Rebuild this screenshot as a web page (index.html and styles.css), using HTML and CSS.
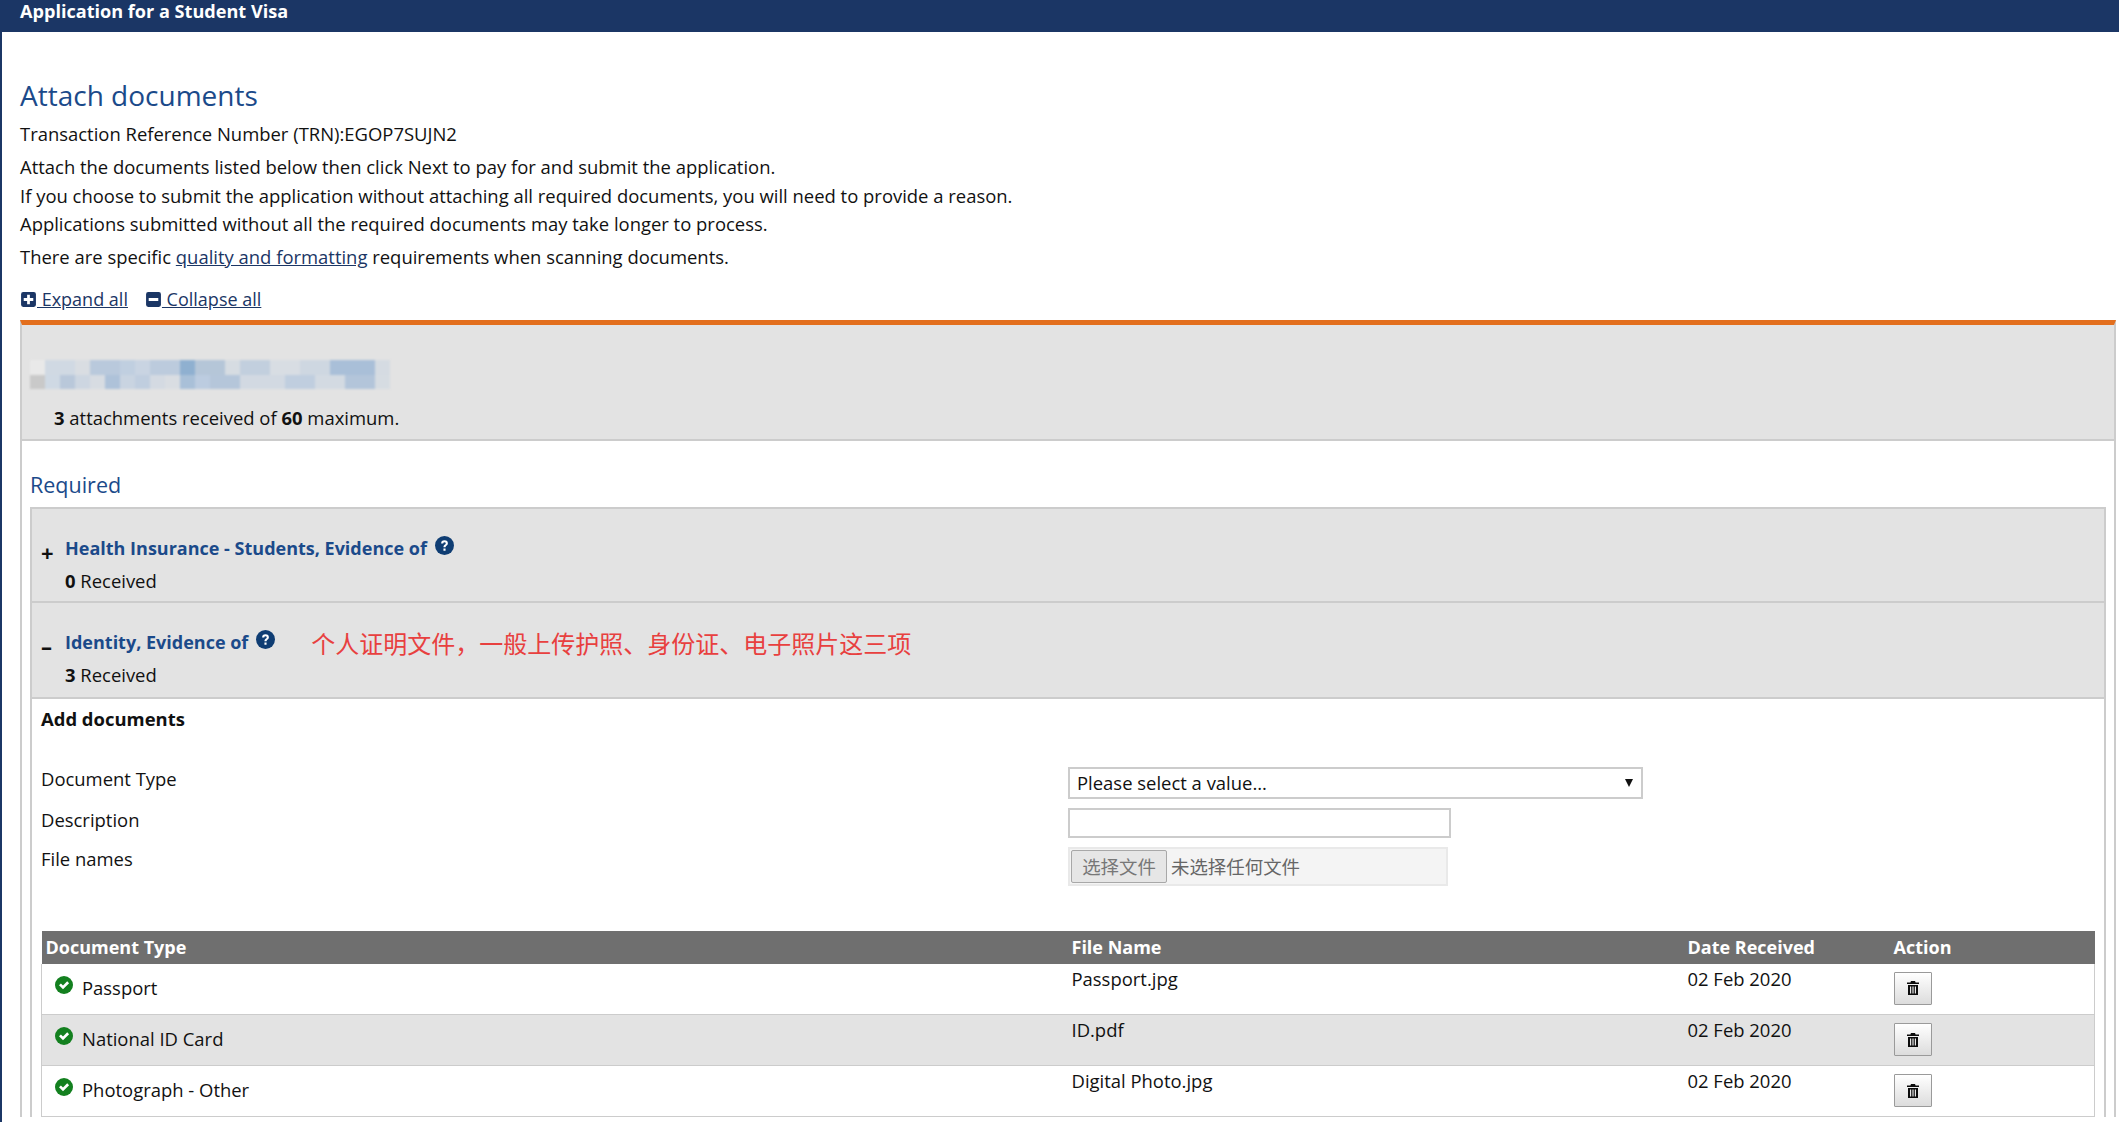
FILE: index.html
```html
<!DOCTYPE html>
<html lang="en">
<head>
    <meta charset="UTF-8">
    <meta name="viewport" content="width=device-width, initial-scale=1.0">
    <title>Application for a Student Visa</title>
    <link rel="stylesheet" href="styles.css">
</head>
<body>
    <svg class="defs" width="0" height="0">
        <symbol id="i-plus" viewBox="0 0 16 16"><path fill-rule="evenodd" d="M3 1h10a2 2 0 0 1 2 2v10a2 2 0 0 1-2 2H3a2 2 0 0 1-2-2V3a2 2 0 0 1 2-2zM6.700 3.500v3.200H3.500v2.600h3.200v3.200h2.600V9.300h3.200V6.700H9.300V3.500z"/></symbol>
        <symbol id="i-minus" viewBox="0 0 16 16"><path fill-rule="evenodd" d="M3 1h10a2 2 0 0 1 2 2v10a2 2 0 0 1-2 2H3a2 2 0 0 1-2-2V3a2 2 0 0 1 2-2zM3.500 6.700v2.600h9V6.700z"/></symbol>
        <symbol id="i-help" viewBox="0 0 18 18">
            <circle cx="9" cy="9" r="9"/>
            <path d="M5.800 7a3.200 3 0 0 1 6.400 0c0 2-2.200 2-2.200 3.600H8c0-2.600 2.200-2.600 2.200-3.600a1.200 1.100 0 0 0-2.400 0zM8 11.800h2v2.100H8z" fill="#fff"/>
        </symbol>
        <symbol id="i-check" viewBox="0 0 18 18">
            <circle cx="9" cy="9" r="9"/>
            <path d="M4 9.300l1.900-1.900 2.100 2.100 4.200-4.200 1.900 1.900-6.100 6.100z" fill="#fff"/>
        </symbol>
        <symbol id="i-trash" viewBox="0 0 14 14"><path fill-rule="evenodd" d="M5 0h4l.6 1.500H13V3H1V1.500h3.400zM2 4h10v10H2zM4 5.500v7h1.200v-7zM6.400 5.500v7h1.200v-7zM8.800 5.500v7H10v-7z"/></symbol>
    </svg>

    <div class="banner">Application for a Student Visa</div>

    <div class="content">
        <h1 class="page-title">Attach documents</h1>
        <p class="trn">Transaction Reference Number (TRN):EGOP7SUJN2</p>
        <div class="intro">
            Attach the documents listed below then click Next to pay for and submit the application.<br>
            If you choose to submit the application without attaching all required documents, you will need to provide a reason.<br>
            Applications submitted without all the required documents may take longer to process.
        </div>
        <p class="scan-note">There are specific <a href="#">quality and formatting</a> requirements when scanning documents.</p>

        <div class="toggle-all">
            <a href="#"><svg class="toggle-icon"><use href="#i-plus"/></svg> Expand all</a>
            <a href="#"><svg class="toggle-icon"><use href="#i-minus"/></svg> Collapse all</a>
        </div>

        <div class="panel">
            <div class="panel-head">
                <div class="blurred"></div>
                <div class="count"><b>3</b> attachments received of <b>60</b> maximum.</div>
            </div>
            <div class="panel-body">
                <h2 class="required">Required</h2>
                <div class="accordion">
                    <div class="acc-row">
                        <div class="acc-title">
                            <span class="acc-sign">+</span>
                            <a class="acc-link" href="#">Health Insurance - Students, Evidence of</a>
                            <svg class="help"><use href="#i-help"/></svg>
                        </div>
                        <div class="acc-count"><b>0</b> Received</div>
                    </div>
                    <div class="acc-row">
                        <div class="acc-title">
                            <span class="acc-sign">–</span>
                            <a class="acc-link" href="#">Identity, Evidence of</a>
                            <svg class="help"><use href="#i-help"/></svg>
                            <span class="note">个人证明文件，一般上传护照、身份证、电子照片这三项</span>
                        </div>
                        <div class="acc-count"><b>3</b> Received</div>
                    </div>
                    <div class="acc-open">
                        <div class="add-title">Add documents</div>
                        <div class="form">
                            <label class="form-label">Document Type</label>
                            <div class="fake-select"><span>Please select a value...</span><span class="arrow"></span></div>
                            <label class="form-label">Description</label>
                            <div class="fake-input"></div>
                            <label class="form-label">File names</label>
                            <div class="fake-file"><span class="file-btn">选择文件</span><span class="file-none">未选择任何文件</span></div>
                        </div>
                        <table class="docs">
                            <thead>
                                <tr>
                                    <th class="col-type">Document Type</th>
                                    <th class="col-file">File Name</th>
                                    <th class="col-date">Date Received</th>
                                    <th class="col-action">Action</th>
                                </tr>
                            </thead>
                            <tbody>
                                <tr>
                                    <td class="doc-type"><svg class="check"><use href="#i-check"/></svg>Passport</td>
                                    <td>Passport.jpg</td>
                                    <td>02 Feb 2020</td>
                                    <td><button class="trash"><svg class="trash-icon"><use href="#i-trash"/></svg></button></td>
                                </tr>
                                <tr>
                                    <td class="doc-type"><svg class="check"><use href="#i-check"/></svg>National ID Card</td>
                                    <td>ID.pdf</td>
                                    <td>02 Feb 2020</td>
                                    <td><button class="trash"><svg class="trash-icon"><use href="#i-trash"/></svg></button></td>
                                </tr>
                                <tr>
                                    <td class="doc-type"><svg class="check"><use href="#i-check"/></svg>Photograph - Other</td>
                                    <td>Digital Photo.jpg</td>
                                    <td>02 Feb 2020</td>
                                    <td><button class="trash"><svg class="trash-icon"><use href="#i-trash"/></svg></button></td>
                                </tr>
                            </tbody>
                        </table>
                    </div>
                </div>
            </div>
        </div>
    </div>
</body>
</html>
```

FILE: styles.css
```css
* {
    margin: 0;
    padding: 0;
    box-sizing: border-box;
}

html, body {
    height: 1122px;
    overflow: hidden;
}

body {
    border-left: 2px solid #1b3665;
    background: #fff;
    color: #111;
    font-family: "Open Sans", "Noto Sans CJK SC", sans-serif;
    font-size: 18.45px;
}

.defs {
    position: absolute;
}

.banner {
    height: 32px;
    margin-left: -2px;
    padding-left: 20px;
    background: #1b3665;
    color: #fff;
    font-size: 18.1px;
    font-weight: 700;
    line-height: 22px;
}

.content {
    padding: 43px 3px 0 18px;
}

.page-title {
    height: 40px;
    color: #1b4a8a;
    font-size: 28px;
    font-weight: 400;
    line-height: 40px;
}

.trn {
    margin-top: 5px;
    line-height: 28px;
}

.intro {
    margin-top: 5px;
    line-height: 28.5px;
}

.scan-note {
    margin-top: 4px;
    line-height: 28px;
}

.scan-note a, .toggle-all a {
    color: #1b3665;
}

.toggle-all {
    display: flex;
    gap: 17px;
    margin-top: 14px;
    height: 28px;
    font-size: 18px;
    line-height: 28px;
}

.toggle-icon {
    width: 17px;
    height: 17px;
    fill: #1b3665;
    vertical-align: -2px;
}

.panel {
    margin-top: 7px;
    border-top: 5px solid #e36f1e;
    border-left: 2px solid #ccc;
    border-right: 2px solid #ccc;
}

.panel-head {
    height: 116px;
    padding-top: 35px;
    background: #e3e3e3;
    border-bottom: 2px solid #ccc;
}

.blurred {
    width: 360px;
    height: 29px;
    margin-left: 8px;
    background-image:
        linear-gradient(90deg, #e9e9e9 15px, #d0d9e3 15px 45px, #d9dde2 45px 60px, #b9c9dc 60px 90px, #c0cfe0 90px 105px, #c9d4e2 105px 120px, #bccbdd 120px 150px, #8fb0d0 150px 165px, #b5c6d8 165px 195px, #d6dce2 195px 210px, #c2cfde 210px 240px, #d8dde3 240px 270px, #ced7e1 270px 300px, #a9bfd8 300px 345px, #d5dbe2 345px),
        linear-gradient(90deg, #c9c9c9 15px, #cfd9e4 15px 30px, #b9c8da 30px 45px, #cdd6e1 45px 60px, #d7dce2 60px 75px, #aec2d9 75px 90px, #c9d4e1 90px 105px, #c0cedf 105px 120px, #d4dae2 120px 135px, #d9dde2 135px 150px, #a9c0d8 150px 165px, #bccce0 165px 180px, #b5c6da 180px 210px, #d2d9e2 210px 255px, #c0cedf 255px 285px, #d3dae2 285px 315px, #b3c5da 315px 345px, #d6dce2 345px);
    background-size: 100% 15px, 100% 14px;
    background-position: 0 0, 0 15px;
    background-repeat: no-repeat;
    filter: blur(1px);
}

.count {
    margin-top: 17px;
    margin-left: 32px;
    line-height: 24px;
}

.panel-body {
    padding: 0 8px;
}

.required {
    height: 66px;
    padding-top: 28px;
    color: #1b4a8a;
    font-size: 21.5px;
    font-weight: 400;
    line-height: 32px;
}

.accordion {
    border: 2px solid #ccc;
    border-top-width: 2px;
    border-bottom: 0;
}

.acc-row {
    height: 94px;
    padding: 21px 0 0 9px;
    background: #e3e3e3;
    border-bottom: 2px solid #ccc;
}

.acc-row + .acc-row {
    height: 96px;
}

.acc-title {
    display: flex;
    align-items: center;
    height: 36px;
}

.acc-sign {
    width: 24px;
    margin-top: 8px;
    font-size: 22px;
    font-weight: 700;
    line-height: 22px;
}

.acc-link {
    color: #1b4a8a;
    font-size: 18px;
    font-weight: 700;
    text-decoration: none;
}

.help {
    width: 19px;
    height: 19px;
    margin: -5px 0 0 8px;
    fill: #0f3d73;
}

.note {
    margin: 5px 0 0 36px;
    color: #e8403f;
    font-size: 24px;
    line-height: 30px;
}

.acc-count {
    margin: 3px 0 0 24px;
    line-height: 24px;
}

.acc-open {
    padding: 7px 8px 0 9px;
}

.add-title {
    font-weight: 700;
    line-height: 26px;
}

.form {
    display: grid;
    grid-template-columns: 1027px 1fr;
    grid-template-rows: 32px 30px 39px;
    row-gap: 9px;
    margin-top: 35px;
}

.form-label {
    line-height: 24px;
}

.fake-select {
    display: flex;
    align-items: center;
    justify-content: space-between;
    width: 575px;
    padding: 0 7px;
    background: #fff;
    border: 2px solid #ccc;
}

.arrow {
    width: 0;
    height: 0;
    margin-right: 1px;
    border-left: 4px solid transparent;
    border-right: 4px solid transparent;
    border-top: 8px solid #111;
}

.fake-input {
    width: 383px;
    border: 2px solid #ccc;
}

.fake-file {
    display: flex;
    align-items: center;
    gap: 4px;
    width: 380px;
    padding-left: 1px;
    background: #f4f4f4;
    border: 2px solid #e9e9e9;
    color: #666;
}

.file-btn {
    width: 96px;
    height: 33px;
    background: #e6e6e6;
    border: 1px solid #a8a8a8;
    border-radius: 2px;
    color: #777;
    line-height: 31px;
    text-align: center;
}

.docs {
    width: 2054px;
    margin-top: 45px;
    border-collapse: collapse;
    table-layout: fixed;
}

.docs th {
    height: 33px;
    padding-left: 4px;
    background: #6f6f6f;
    color: #fff;
    font-size: 18px;
    font-weight: 700;
    text-align: left;
}

.col-type { width: 1026px; }
.col-file { width: 616px; }
.col-date { width: 206px; }

.docs td {
    height: 51px;
    padding: 3px 0 0 4px;
    border-bottom: 1px solid #ccc;
    line-height: 24px;
    vertical-align: top;
}

.docs tr:nth-child(2) td {
    background: #e3e3e3;
}

.docs td:first-child {
    border-left: 1px solid #ccc;
}

.docs td:last-child {
    border-right: 1px solid #ccc;
}

.docs .doc-type {
    padding: 12px 0 0 13px;
}

.check {
    width: 18px;
    height: 18px;
    margin-right: 9px;
    fill: #13801f;
    vertical-align: 1px;
}

.trash {
    display: block;
    width: 38px;
    height: 33px;
    margin-top: 5px;
    background: linear-gradient(#fff, #dcdcdc);
    border: 1px solid #9a9a9a;
    border-radius: 1px;
}

.trash-icon {
    display: block;
    width: 14px;
    height: 14px;
    margin: 0 auto;
    fill: #0c0c0c;
}
```
